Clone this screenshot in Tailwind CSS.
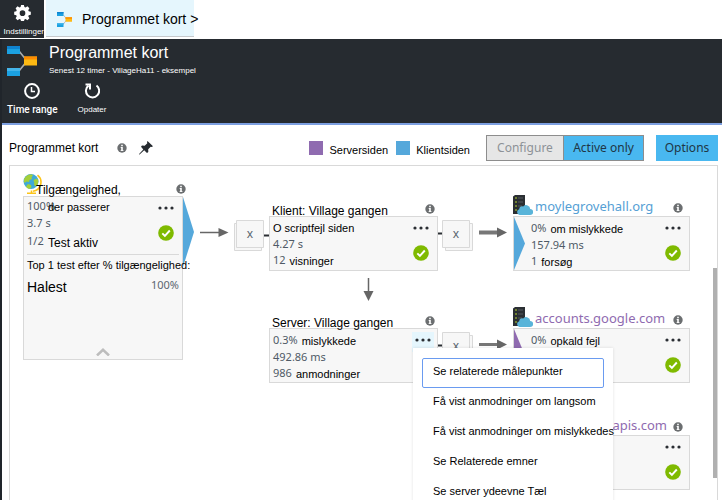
<!DOCTYPE html>
<html lang="da">
<head>
<meta charset="utf-8">
<meta name="viewport" content="width=device-width, initial-scale=1">
<title>Programmet kort</title>
<script src="https://cdn.jsdelivr.net/npm/@tailwindcss/browser@4"></script>
</head>
<body class="flex h-screen flex-col overflow-hidden bg-white font-['Liberation_Sans',Arial,sans-serif] text-xs text-black">

<svg class="hidden" aria-hidden="true">
  <symbol id="map" viewBox="0 0 30 30">
    <path d="M12 5 L20 15 L12 25" fill="none" stroke="#a9adb0" stroke-width="1.6"/>
    <path d="M0 0h13v8H0z" fill="#1ba1e2"/><path d="M0 0h13v3H0z" fill="#0f83d0"/>
    <path d="M0 22h13v8H0z" fill="#1ba1e2"/><path d="M0 22h13v3H0z" fill="#45b5ea"/>
    <path d="M17 10.500h13v9H17z" fill="#fdb913"/><path d="M17 10.500h13v3H17z" fill="#ff8c00"/>
  </symbol>
  <symbol id="info" viewBox="0 0 10 10">
    <circle cx="5" cy="5" r="4.700" fill="#6b6e70"/>
    <path d="M4.200 1.800h1.600v1.400H4.200zM3.700 4.100h2.100v3.100h.7v.9H3.600v-.9h.6V5h-.5z" fill="#fff"/>
  </symbol>
  <symbol id="ok" viewBox="0 0 16 16">
    <circle cx="8" cy="8" r="7.800" fill="#7fba00"/>
    <path d="M4.300 8.300l2.600 2.600 4.900-5.400" fill="none" stroke="#fff" stroke-width="1.900"/>
  </symbol>
  <symbol id="dots" viewBox="0 0 16 4">
    <g fill="#2a2e33"><circle cx="2" cy="2" r="1.600"/><circle cx="8" cy="2" r="1.600"/><circle cx="14" cy="2" r="1.600"/></g>
  </symbol>
  <symbol id="server" viewBox="0 0 20 20">
    <path d="M0 1.500L2 0h10v19H0z" fill="#2b2f33"/>
    <path d="M2 3h2M2 7h2M2 11h2M2 15h2" stroke="#b8d432" stroke-width="1.200"/>
    <path d="M5 3h5M5 7h5M5 11h4" stroke="#555b60" stroke-width="1"/>
    <path d="M6.500 20a3 3 0 0 1-.3-5.800 3.300 3.300 0 0 1 4-2.700 4 4 0 0 1 7 2.500 3 3 0 0 1 0 6z" fill="#59b4d9"/>
  </symbol>
  <symbol id="globe" viewBox="0 0 20 20">
    <path d="M14.500 1.200A9 9 0 0 1 10 17.200M8.500 16.500v2M4 19.200h9" fill="none" stroke="#fcc419" stroke-width="1.600"/>
    <circle cx="8" cy="7.500" r="7.500" fill="#3fa9d8"/>
    <path d="M3 2.500c2-2 5-2.500 7-1.500L8.500 3.500 9 5 6.500 6 6 8 3.500 7.500 1.500 9C.2 6.500 1 4 3 2.500zM10.500 6l3-1.500 1.700 1.500c.5 3-.7 5-2.200 6.500L11 11l.3-2zM5 10l3 1 .5 2L7 15c-2-.3-3-1-4-2.500z" fill="#a4cf3a"/>
  </symbol>
</svg>

<nav class="flex h-[39px] shrink-0 gap-0.5" aria-label="Navigation">
  <button class="flex h-[38px] w-11 flex-col items-center overflow-hidden bg-[#262b30] pt-1 text-white">
    <svg class="size-[17px] shrink-0" viewBox="0 0 18 18" fill="#fff"><path fill-rule="evenodd" d="M7.500 1h3l.5 2.200 1.300.5 1.900-1.200 2.100 2.100-1.200 1.900.5 1.300 2.200.5v3l-2.200.5-.5 1.300 1.200 1.900-2.100 2.100-1.900-1.200-1.300.5-.5 2.200h-3L7 16.400l-1.300-.5-1.900 1.200L1.700 15l1.200-1.900-.5-1.300L.2 11.300v-3l2.200-.5.5-1.300-1.200-1.900 2.100-2.100 1.900 1.200L7 3.200zM9 6.700a3 3 0 1 0 0 6 3 3 0 0 0 0-6z"/></svg>
    <span class="mt-[3px] self-end text-[8px] leading-4">Indstillinger</span>
  </button>
  <a href="#" class="flex h-[37px] w-[148px] items-center gap-2.5 border-b border-[#c6c9cc] bg-[#e5f6fd] pt-0.5 pl-[11px] text-sm whitespace-nowrap">
    <svg class="size-[15px] shrink-0"><use href="#map"/></svg><span>Programmet kort &gt;</span>
  </a>
</nav>

<div class="flex min-h-0 flex-1 flex-col border-l-2 border-[#20252b]">
  <header class="h-[86px] shrink-0 border-b-2 border-[#7c9fe0] bg-[#262b30] px-[5px] pt-1 text-white">
    <div class="flex gap-3">
      <svg class="mt-[3px] size-[30px] shrink-0"><use href="#map"/></svg>
      <div>
        <h1 class="text-base leading-5">Programmet kort</h1>
        <p class="text-[8px] leading-4">Senest 12 timer - VillageHa11 - eksempel</p>
      </div>
    </div>
    <div class="flex gap-5">
      <button class="flex flex-col items-center pt-1">
        <svg class="size-4" viewBox="0 0 16 16" fill="none" stroke="#fff" stroke-width="2"><circle cx="8" cy="8" r="6.900"/><path d="M7.500 4v4.500H11" stroke-width="1.500"/></svg>
        <span class="mt-[3px] font-[Roboto,sans-serif] text-[10px] leading-4 font-medium">Time range</span>
      </button>
      <button class="flex flex-col items-center pt-1">
        <svg class="size-4" viewBox="0 0 16 16" fill="none" stroke="#fff" stroke-width="2"><path d="M12.500 2.500A6.600 6.600 0 1 1 4.500 2.600"/><path d="M1.500 1.500H6V6.500" stroke-width="2"/></svg>
        <span class="mt-[3px] text-[8px] leading-4">Opdater</span>
      </button>
    </div>
  </header>

  <main class="flex min-h-0 flex-1 flex-col pr-1 pl-[7px]">
    <div class="flex h-10 shrink-0 items-center pt-[5px]">
      <h2 class="w-[108px] whitespace-nowrap">Programmet kort</h2>
      <svg class="size-2.5"><use href="#info"/></svg>
      <svg class="ml-3 size-[14px]" viewBox="0 0 14 14" fill="#262b30"><path d="M8.500 0L14 5.300l-1.300.7-1-.3-2.500 2.600.1 2.700-1.300 1-2.800-2.800L.600 13.500 0 13.600l.3-.8 4-4.400L2 5.800l1-1.200 2.700.2L8.300 2.200 8 1z"/></svg>
      <ul class="ml-auto flex items-center gap-2">
        <li class="flex items-center gap-1.5"><i class="size-3.5 bg-[#8f6bb0]"></i><span class="pt-1 text-[11px] leading-4">Serversiden</span></li>
        <li class="flex items-center gap-1.5"><i class="size-3.5 bg-[#55a8db]"></i><span class="pt-1 text-[11px] leading-4">Klientsiden</span></li>
      </ul>
      <div class="ml-4 flex h-[26px] border border-[#8d8d8d] font-['Noto_Sans',sans-serif]">
        <button class="w-[76px] bg-[#e6e6e6] text-[#8d9297]">Configure</button>
        <button class="w-20 border-l border-[#8d8d8d] bg-[#49b8f0] text-[#1f3645]">Active only</button>
      </div>
      <button class="ml-3 h-[26px] w-[62px] bg-[#49b8f0] font-['Noto_Sans',sans-serif] text-[#1f3645]">Options</button>
    </div>

    <section class="relative min-h-0 flex-1 overflow-hidden border border-b-0 border-[#d9d9d9]" aria-label="Programmet kort">
      <svg class="absolute top-0 left-0 h-[334px] w-[700px]" viewBox="10 166 700 334" aria-hidden="true">
        <g fill="#666" stroke="#666">
          <path d="M200 232.500h20" stroke-width="1.500"/><path d="M218.500 228l10 4.500-10 4.500z" stroke="none"/>
          <path d="M368.500 278v14" stroke-width="1.500"/><path d="M363.500 291l5 10 5-10z" stroke="none"/>
          <path d="M479 232.500h20" stroke-width="4" stroke="#777"/><path d="M497 227.500l10 5-10 5z" stroke="none"/>
          <path d="M479 344.500h20" stroke-width="3" stroke="#777"/><path d="M497 339.500l10 5-10 5z" stroke="none"/>
        </g>
        <path d="M264 235.500h6M437 233.500h6M437 345.500h6" stroke="#2a2e33" stroke-width="2"/>
        <g fill="#f7f7f7" stroke="#d9d9d9"><path d="M234.500 223.500h27v27h-27z"/><path d="M236.500 220.500h27v27h-27z"/><path d="M445.500 223.500h27v27h-27z"/><path d="M442.500 220.500h27v27h-27z"/><path d="M445.500 335.500h27v27h-27z"/><path d="M442.500 332.500h27v27h-27z"/></g>
        <path d="M183 197l11 35-11 35z" fill="#55a8db"/>
        <g fill="#5b6670" font-family="Noto Sans" font-size="12" text-anchor="middle"><text x="250" y="238">x</text><text x="456" y="238">x</text><text x="456" y="350">x</text></g>
      </svg>

      <article class="absolute top-2 left-[13px] w-[160px]">
        <svg class="absolute top-0 left-0 z-10 size-5"><use href="#globe"/></svg>
        <div class="relative z-10 flex h-[22px] items-end justify-between pl-[13px]">
          <h3 class="leading-3">Tilgængelighed,</h3><svg class="mb-0.5 -mr-[3px] size-2.5"><use href="#info"/></svg>
        </div>
        <div class="relative flex h-[164px] flex-col border border-[#d9d9d9] bg-[#f7f7f7] px-[3px] text-[11px] whitespace-nowrap">
          <button class="absolute top-[9px] right-2" aria-label="Mere"><svg class="h-1 w-4"><use href="#dots"/></svg></button>
          <svg class="absolute top-7 right-2 size-4"><use href="#ok"/></svg>
          <p class="flex h-[19px] items-center"><b class="w-[21px] font-['Noto_Sans',sans-serif] font-normal text-[#4f5a66]">100%</b><span class="pt-0.5">der passerer</span></p>
          <p class="font-['Noto_Sans',sans-serif] leading-[14px] text-[#4f5a66]">3.7 s</p>
          <p class="flex h-[22px] items-center"><b class="w-[21px] font-['Noto_Sans',sans-serif] font-normal text-[#4f5a66]">1/2</b><span class="pt-1 text-xs">Test aktiv</span></p>
          <div class="mt-0.5 flex justify-between border-t border-[#d9d9d9] pt-0.5"><span class="w-0 leading-4">Top 1 test efter % tilgængelighed:</span></div>
          <p class="flex justify-between"><span class="pt-1 text-sm leading-5">Halest</span><span class="pt-1 font-['Noto_Sans',sans-serif] leading-4 text-[#5b6670]">100%</span></p>
          <button class="absolute inset-x-0 bottom-[3px] flex justify-center" aria-label="Fold sammen"><svg class="h-2 w-4" viewBox="0 0 16 8" fill="none" stroke="#bdbdbd" stroke-width="2.500"><path d="M2 7.500L8 1.800l6 5.700"/></svg></button>
        </div>
      </article>

      <article class="absolute top-9 left-[259px] w-[169px]">
        <div class="relative z-10 flex h-[14px] items-center justify-between px-[3px] whitespace-nowrap"><h3 class="pt-1">Klient: Village gangen</h3><svg class="size-2.5"><use href="#info"/></svg></div>
        <div class="relative h-[55px] border border-[#d9d9d9] bg-[#f7f7f7] px-[3px] pt-[3px] text-[11px] leading-4 whitespace-nowrap">
          <button class="absolute top-[9px] right-2" aria-label="Mere"><svg class="h-1 w-4"><use href="#dots"/></svg></button>
          <svg class="absolute top-7 right-2 size-4"><use href="#ok"/></svg>
          <p>O scriptfejl siden</p>
          <p class="font-['Noto_Sans',sans-serif] text-[#4f5a66]">4.27 s</p>
          <p class="flex gap-1"><b class="font-['Noto_Sans',sans-serif] font-normal text-[#4f5a66]">12</b><span class="pt-px">visninger</span></p>
        </div>
      </article>

      <article class="absolute top-[148px] left-[259px] w-[169px]">
        <div class="relative z-10 flex h-[14px] items-center justify-between px-[3px] whitespace-nowrap"><h3 class="pt-1">Server: Village gangen</h3><svg class="size-2.5"><use href="#info"/></svg></div>
        <div class="relative h-[55px] border border-[#d9d9d9] bg-[#f7f7f7] px-[3px] pt-[3px] text-[11px] leading-4 whitespace-nowrap">
          <button class="absolute top-[3px] right-[3px] flex h-5 w-[22px] items-center justify-center bg-[#e5f6fd]" aria-label="Mere"><svg class="mb-1 h-1 w-4"><use href="#dots"/></svg></button>
          <p class="flex gap-1"><b class="font-['Noto_Sans',sans-serif] font-normal text-[#4f5a66]">0.3%</b><span class="pt-px">mislykkede</span></p>
          <p class="font-['Noto_Sans',sans-serif] text-[#4f5a66]">492.86 ms</p>
          <p class="flex gap-1"><b class="font-['Noto_Sans',sans-serif] font-normal text-[#4f5a66]">986</b><span class="pt-px">anmodninger</span></p>
        </div>
      </article>

      <article class="absolute top-7 left-[503px] w-[177px]">
        <div class="relative z-10 flex h-[22px] items-center gap-0.5 pr-[7px] whitespace-nowrap"><svg class="size-5"><use href="#server"/></svg><h3 class="flex-1 pt-1 font-['Noto_Sans',sans-serif] text-[13px] text-[#55a0d5]">moylegrovehall.org</h3><svg class="mt-1.5 size-2.5"><use href="#info"/></svg></div>
        <div class="relative h-[55px] border border-[#d9d9d9] bg-[#f7f7f7] pt-[3px] pl-[17px] text-[11px] leading-4 whitespace-nowrap">
          <svg class="absolute top-0 left-0 h-[53px] w-[11px]" viewBox="0 0 11 53"><path d="M0 0l11 26.500L0 53z" fill="#55a8db"/></svg>
          <button class="absolute top-[9px] right-2" aria-label="Mere"><svg class="h-1 w-4"><use href="#dots"/></svg></button>
          <svg class="absolute top-7 right-2 size-4"><use href="#ok"/></svg>
          <p class="flex gap-1"><b class="font-['Noto_Sans',sans-serif] font-normal text-[#4f5a66]">0%</b><span class="pt-px">om mislykkede</span></p>
          <p class="font-['Noto_Sans',sans-serif] text-[#4f5a66]">157.94 ms</p>
          <p class="flex gap-1"><b class="font-['Noto_Sans',sans-serif] font-normal text-[#4f5a66]">1</b><span class="pt-px">forsøg</span></p>
        </div>
      </article>

      <article class="absolute top-[140px] left-[503px] w-[177px]">
        <div class="relative z-10 flex h-[22px] items-center gap-0.5 pr-[7px] whitespace-nowrap"><svg class="size-5"><use href="#server"/></svg><h3 class="flex-1 pt-1 font-['Noto_Sans',sans-serif] text-[13px] text-[#8f6bb0]">accounts.google.com</h3><svg class="mt-1.5 size-2.5"><use href="#info"/></svg></div>
        <div class="relative h-[55px] border border-[#d9d9d9] bg-[#f7f7f7] pt-[3px] pl-[17px] text-[11px] leading-4 whitespace-nowrap">
          <svg class="absolute top-0 left-0 h-[53px] w-[11px]" viewBox="0 0 11 53"><path d="M0 0l11 26.500L0 53z" fill="#8f6bb0"/></svg>
          <button class="absolute top-[9px] right-2" aria-label="Mere"><svg class="h-1 w-4"><use href="#dots"/></svg></button>
          <svg class="absolute top-7 right-2 size-4"><use href="#ok"/></svg>
          <p class="flex gap-1"><b class="font-['Noto_Sans',sans-serif] font-normal text-[#4f5a66]">0%</b><span class="pt-px">opkald fejl</span></p>
        </div>
      </article>

      <article class="absolute top-[247px] left-[503px] w-[177px]">
        <div class="relative flex h-[22px] items-center justify-end gap-1.5 pr-[7px]"><h3 class="pt-1 font-['Noto_Sans',sans-serif] text-[13px] text-[#8f6bb0]">apis.com</h3><svg class="mt-1.5 size-2.5"><use href="#info"/></svg></div>
        <div class="relative h-[55px] border border-[#d9d9d9] bg-[#f7f7f7]">
          <button class="absolute top-[9px] right-2" aria-label="Mere"><svg class="h-1 w-4"><use href="#dots"/></svg></button>
          <svg class="absolute top-7 right-2 size-4"><use href="#ok"/></svg>
        </div>
      </article>

      <div class="absolute top-[182px] left-[403px] z-20 flex w-[200px] flex-col bg-white px-[9px] pt-2.5 pb-2 text-[11px] shadow-[0_0_3px_rgba(0,0,0,0.12)]" role="menu">
        <button role="menuitem" class="h-[30px] rounded-xs border border-[#6a9bf0] pb-1 pl-2.5 text-left whitespace-nowrap">Se relaterede målepunkter</button>
        <button role="menuitem" class="h-[30px] pb-1 pl-[11px] text-left whitespace-nowrap">Få vist anmodninger om langsom</button>
        <button role="menuitem" class="h-[30px] pb-1 pl-[11px] text-left whitespace-nowrap">Få vist anmodninger om mislykkedes</button>
        <button role="menuitem" class="h-[30px] pb-1 pl-[11px] text-left whitespace-nowrap">Se Relaterede emner</button>
        <button role="menuitem" class="h-[30px] pb-1 pl-[11px] text-left whitespace-nowrap">Se server ydeevne Tæl</button>
      </div>

      <div class="absolute top-[102px] right-0 h-[210px] w-1 bg-[#b0b0b0]"></div>
    </section>
  </main>
</div>
</body>
</html>
